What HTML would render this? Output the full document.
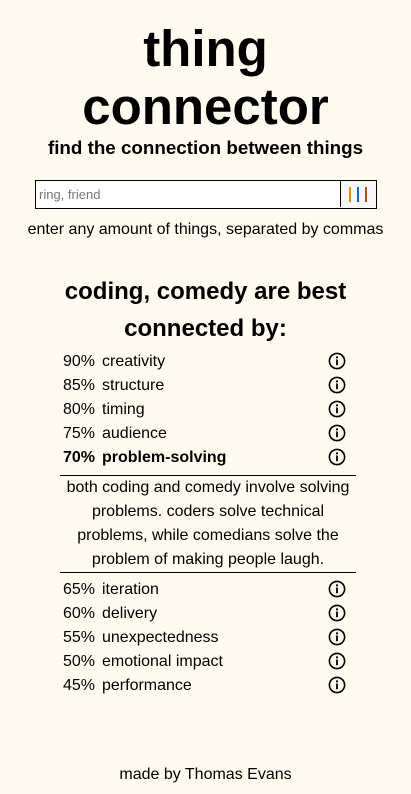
<!DOCTYPE html>
<html><head><style>
body{margin:0;background:#fffbf0;font-family:"Liberation Sans",sans-serif;color:#000;width:411px;height:794px;position:relative;overflow:hidden}
.a{position:absolute;left:0;width:411px;text-align:center}
.row{position:absolute;left:63px;width:294px;height:24px;font-size:16px;line-height:24px}
.row .p{position:absolute;left:0}
.row .l{position:absolute;left:39px}
.row svg{position:absolute;left:265px;top:2px}
.hr{position:absolute;left:60px;width:296px;height:1px;background:#000}
</style></head><body>
<div class="a" style="top:20px;font-size:51px;font-weight:bold;line-height:58px">thing<br>connector</div>
<div class="a" style="top:137px;font-size:18.8px;font-weight:bold">find the connection between things</div>
<div style="position:absolute;left:35px;top:180px;width:342px;height:29px;box-sizing:border-box;border:1.5px solid #000;background:#fff">
<span style="position:absolute;left:3px;top:6px;font-size:13px;color:#777">ring, friend</span>
<div style="position:absolute;right:0;top:0;width:35px;height:26px;border-left:1.5px solid #000;background:#f7f7f7">
<div style="position:absolute;left:8px;top:6px;width:2px;height:15px;background:#e08a1e"></div>
<div style="position:absolute;left:16px;top:6px;width:2px;height:15px;background:#1e64c8"></div>
<div style="position:absolute;left:24px;top:6px;width:2px;height:15px;background:#a0521e"></div>
</div></div>
<div class="a" style="top:221px;font-size:16px">enter any amount of things, separated by commas</div>
<div class="a" style="top:273px;font-size:24px;font-weight:bold;line-height:37px">coding, comedy are best<br>connected by:</div>
<div id="r"></div>
<div class="hr" style="top:475px"></div>
<div class="a" style="top:476px;font-size:16px;line-height:24px;left:60px;width:296px">both coding and comedy involve solving problems. coders solve technical problems, while comedians solve the problem of making people laugh.</div>
<div class="hr" style="top:572px"></div>
<div class="a" style="top:766px;font-size:16px">made by Thomas Evans</div>
<script>
var d=[[350,"90%","creativity"],[374,"85%","structure"],[398,"80%","timing"],[422,"75%","audience"],[446,"70%","problem-solving",1],[578,"65%","iteration"],[602,"60%","delivery"],[626,"55%","unexpectedness"],[650,"50%","emotional impact"],[674,"45%","performance"]];
var h="";d.forEach(function(x){h+='<div class="row" style="top:'+x[0]+'px;'+(x[3]?'font-weight:bold':'')+'"><span class="p">'+x[1]+'</span><span class="l">'+x[2]+'</span><svg width="18" height="18" viewBox="0 0 18 18"><circle cx="9" cy="9" r="7.6" fill="none" stroke="#000" stroke-width="1.6"/><circle cx="9" cy="5.4" r="1.1"/><rect x="8.1" y="7.5" width="1.8" height="5.8"/></svg></div>'});
document.getElementById("r").innerHTML=h;
</script>
</body></html>
